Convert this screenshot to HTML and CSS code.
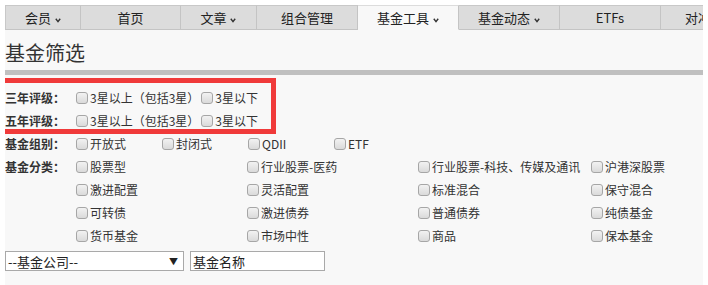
FILE: index.html
```html
<!DOCTYPE html>
<html lang="zh">
<head>
<meta charset="utf-8">
<title>基金筛选</title>
<link rel="stylesheet" href="styles.css">
</head>
<body>
<div class="page">
  <nav class="tabs">
    <div class="tab w76">会员 <svg class="caret" width="6" height="5" viewBox="0 0 6 5"><polyline points="0.8,0.8 3,3.6 5.2,0.8" fill="none" stroke="#333" stroke-width="1.4"/></svg></div>
    <div class="tab w100">首页</div>
    <div class="tab w76">文章 <svg class="caret" width="6" height="5" viewBox="0 0 6 5"><polyline points="0.8,0.8 3,3.6 5.2,0.8" fill="none" stroke="#333" stroke-width="1.4"/></svg></div>
    <div class="tab w101">组合管理</div>
    <div class="tab w101 active">基金工具 <svg class="caret" width="6" height="5" viewBox="0 0 6 5"><polyline points="0.8,0.8 3,3.6 5.2,0.8" fill="none" stroke="#333" stroke-width="1.4"/></svg></div>
    <div class="tab w101">基金动态 <svg class="caret" width="6" height="5" viewBox="0 0 6 5"><polyline points="0.8,0.8 3,3.6 5.2,0.8" fill="none" stroke="#333" stroke-width="1.4"/></svg></div>
    <div class="tab w101">ETFs</div>
    <div class="tab w101">对冲基金</div>
  </nav>
  <div class="content">
    <h1 class="title">基金筛选</h1>
    <div class="bar"></div>
    <div class="filters">
      <div class="row">
        <span class="label">三年评级：</span>
        <div class="opts inline">
          <label class="opt"><span class="cb"></span>3星以上（包括3星）</label>
          <label class="opt"><span class="cb"></span>3星以下</label>
        </div>
      </div>
      <div class="row">
        <span class="label">五年评级：</span>
        <div class="opts inline">
          <label class="opt"><span class="cb"></span>3星以上（包括3星）</label>
          <label class="opt"><span class="cb"></span>3星以下</label>
        </div>
      </div>
      <div class="row">
        <span class="label">基金组别：</span>
        <div class="opts grid4">
          <label class="opt"><span class="cb"></span>开放式</label>
          <label class="opt"><span class="cb"></span>封闭式</label>
          <label class="opt"><span class="cb"></span>QDII</label>
          <label class="opt"><span class="cb"></span>ETF</label>
        </div>
      </div>
      <div class="row">
        <span class="label">基金分类：</span>
        <div class="opts grid-wide">
          <label class="opt"><span class="cb"></span>股票型</label>
          <label class="opt"><span class="cb"></span>行业股票-医药</label>
          <label class="opt"><span class="cb"></span>行业股票-科技、传媒及通讯</label>
          <label class="opt"><span class="cb"></span>沪港深股票</label>
          <label class="opt"><span class="cb"></span>激进配置</label>
          <label class="opt"><span class="cb"></span>灵活配置</label>
          <label class="opt"><span class="cb"></span>标准混合</label>
          <label class="opt"><span class="cb"></span>保守混合</label>
          <label class="opt"><span class="cb"></span>可转债</label>
          <label class="opt"><span class="cb"></span>激进债券</label>
          <label class="opt"><span class="cb"></span>普通债券</label>
          <label class="opt"><span class="cb"></span>纯债基金</label>
          <label class="opt"><span class="cb"></span>货币基金</label>
          <label class="opt"><span class="cb"></span>市场中性</label>
          <label class="opt"><span class="cb"></span>商品</label>
          <label class="opt"><span class="cb"></span>保本基金</label>
        </div>
      </div>
    </div>
    <div class="search">
      <div class="select"><span>--基金公司--</span><span class="arrow">▼</span></div>
      <input class="name" type="text" value="基金名称">
    </div>
  </div>
  <div class="annot"></div>
</div>
</body>
</html>
```
FILE: styles.css
```css
html, body {
  margin: 0;
  padding: 0;
  background: #ffffff;
}
body {
  font-family: "Noto Sans CJK SC", "Liberation Sans", sans-serif;
  font-size: 12px;
  color: #333;
}
.page {
  position: relative;
  margin: 5px 0 0 5px;
  width: 698px;
  height: 280px;
  background: #f8f8f8;
  overflow: hidden;
}
.tabs {
  display: flex;
  height: 25px;
  background: #f8f8f8;
}
.tab {
  flex: none;
  box-sizing: border-box;
  height: 25px;
  line-height: 23px;
  text-align: center;
  font-size: 13px;
  color: #222;
  background: #dcdcdc;
  border-top: 1px solid #c8c8c8;
  border-bottom: 1px solid #c4c4c4;
  border-right: 1px solid #c4c4c4;
  white-space: nowrap;
  overflow: hidden;
}
.tab:first-child { border-left: 1px solid #c8c8c8; }
.tab.active {
  background: #f8f8f8;
  border-bottom-color: #f8f8f8;
  border-top-color: #dcdcdc;
}
.w76 { width: 76px; }
.w100 { width: 100px; }
.w101 { width: 101px; }
.caret {
  margin-left: 1px;
  vertical-align: 0;
}
.title {
  margin: 9px 0 0 0;
  font-size: 20px;
  line-height: 28px;
  font-weight: normal;
  color: #333;
}
.bar {
  margin-top: 3px;
  height: 5px;
  background: #c0c0c0;
}
.filters {
  margin-top: 11px;
}
.row {
  display: flex;
  align-items: flex-start;
}
.label {
  flex: none;
  width: 71px;
  line-height: 23px;
  font-weight: bold;
  font-size: 12px;
  color: #333;
}
.opts.inline {
  display: flex;
  gap: 2px;
}
.opts.grid4 {
  display: grid;
  grid-template-columns: repeat(4, 86px);
}
.opts.grid-wide {
  display: grid;
  grid-template-columns: 171px 171px 173px 100px;
}
.opt {
  display: flex;
  align-items: center;
  height: 23px;
  white-space: nowrap;
  color: #333;
}
.cb {
  flex: none;
  box-sizing: border-box;
  width: 12px;
  height: 12px;
  margin-right: 2px;
  border: 1px solid #a6a6a6;
  border-radius: 3px;
  background: linear-gradient(#f2f2f2, #dadada);
}
.search {
  display: flex;
  gap: 6px;
  margin-top: 4px;
}
.select {
  box-sizing: border-box;
  width: 179px;
  height: 20px;
  display: flex;
  justify-content: space-between;
  align-items: center;
  padding: 0 5px 0 2px;
  border: 1px solid #a9a9a9;
  background: #fff;
  font-size: 13px;
  color: #222;
}
.arrow {
  font-size: 9px;
  color: #222;
}
.name {
  box-sizing: border-box;
  width: 135px;
  height: 20px;
  margin: 0;
  padding: 0 2px;
  border: 1px solid #a9a9a9;
  background: #fff;
  font-family: "Noto Sans CJK SC", "Liberation Sans", sans-serif;
  font-size: 13px;
  color: #222;
  outline: none;
}
.annot {
  position: absolute;
  left: -5px;
  top: 73px;
  width: 266px;
  height: 46px;
  border: 5px solid #f03a3a;
  pointer-events: none;
}
```
